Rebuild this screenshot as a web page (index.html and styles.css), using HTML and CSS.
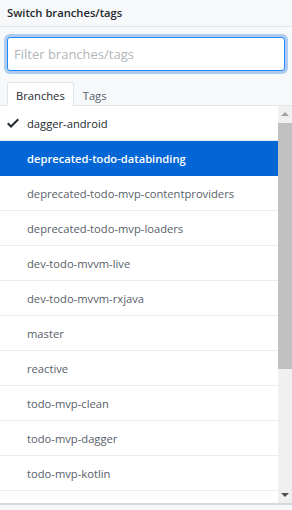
FILE: index.html
```html
<!DOCTYPE html>
<html lang="en">
<head>
  <meta charset="UTF-8" />
  <meta name="viewport" content="width=device-width, initial-scale=1.0" />
  <title>Switch branches/tags</title>
  <link rel="stylesheet" href="styles.css">
</head>
<body>
  <div class="menu">
    <div class="menu-header">Switch branches/tags</div>

    <div class="menu-filter">
      <input type="text" class="filter-input" placeholder="Filter branches/tags" />
    </div>

    <div class="menu-tabs">
      <span class="tab selected">Branches</span>
      <span class="tab">Tags</span>
    </div>

    <div class="menu-body">
      <ul class="menu-list">
        <li class="menu-item current">
          <svg class="check" width="12" height="16" viewBox="0 0 12 16"><path d="M12 5l-8 8-4-4 1.5-1.5L4 10l6.5-6.5z" fill="#24292e"/></svg>
          dagger-android
        </li>
        <li class="menu-item active">deprecated-todo-databinding</li>
        <li class="menu-item">deprecated-todo-mvp-contentproviders</li>
        <li class="menu-item">deprecated-todo-mvp-loaders</li>
        <li class="menu-item">dev-todo-mvvm-live</li>
        <li class="menu-item">dev-todo-mvvm-rxjava</li>
        <li class="menu-item">master</li>
        <li class="menu-item">reactive</li>
        <li class="menu-item">todo-mvp-clean</li>
        <li class="menu-item">todo-mvp-dagger</li>
        <li class="menu-item">todo-mvp-kotlin</li>
        <li class="menu-item">todo-mvp-rxjava</li>
      </ul>
      <div class="scrollbar">
        <span class="arrow up"></span>
        <div class="track"><div class="thumb"></div></div>
        <span class="arrow down"></span>
      </div>
    </div>
  </div>
</body>
</html>
```

FILE: styles.css
```css
* {
  box-sizing: border-box;
  padding: 0;
  margin: 0;
}

body {
  font-family: 'Open Sans', 'Noto Sans', sans-serif;
  background: #f6f8fa;
  color: #24292e;
  width: 292px;
  height: 510px;
  overflow: hidden;
}

.menu {
  display: flex;
  flex-direction: column;
}

.menu-header {
  height: 27px;
  padding: 5px 7px 0;
  font-size: 11.2px;
  font-weight: 600;
  line-height: 16px;
  border-bottom: 1px solid #e1e4e8;
}

.menu-filter {
  padding: 10px 7px 11px 7px;
}

.filter-input {
  display: block;
  width: 278px;
  height: 34px;
  padding: 0 6px;
  font-family: inherit;
  font-size: 13px;
  color: #24292e;
  background: #fff;
  border: 1px solid #2188ff;
  border-radius: 3px;
  outline: none;
  box-shadow: 0 0 0 3px rgba(3, 102, 214, 0.3);
}

.filter-input::placeholder {
  color: #b0b6bc;
}

.menu-tabs {
  display: flex;
  padding: 0 0 0 7px;
  height: 24px;
  border-bottom: 1px solid #e1e4e8;
}

.tab {
  display: block;
  height: 24px;
  padding: 4px 8px 0;
  font-size: 11.2px;
  line-height: 18px;
  color: #586069;
  border: 1px solid transparent;
  border-bottom: 0;
  border-radius: 3px 3px 0 0;
}

.tab.selected {
  color: #24292e;
  background: #fff;
  border-color: #e1e4e8;
  margin-bottom: -1px;
  height: 25px;
}

.menu-body {
  display: flex;
  height: 399px;
  border-bottom: 2px solid #d5d8dc;
  overflow: hidden;
  background: #fff;
}

.menu-list {
  list-style: none;
  flex: 1;
  overflow: hidden;
}

.menu-item {
  display: flex;
  align-items: center;
  height: 35px;
  padding: 0 8px 0 27px;
  font-size: 11.2px;
  color: #586069;
  border-bottom: 1px solid #eaecef;
  position: relative;
}

.menu-item.current {
  color: #24292e;
}

.check {
  position: absolute;
  left: 7px;
  top: 9px;
}

.menu-item.active {
  color: #fff;
  font-weight: 600;
  background: #0366d6;
  border-bottom-color: #0366d6;
}

.scrollbar {
  width: 14px;
  background: #f0f0f0;
  display: flex;
  flex-direction: column;
  align-items: center;
}

.arrow {
  display: block;
  width: 0;
  height: 0;
  border-left: 4px solid transparent;
  border-right: 4px solid transparent;
}

.arrow.up {
  margin: 6px 0 7px;
  border-bottom: 4px solid #a3a3a3;
}

.arrow.down {
  margin: 0 0 6px;
  border-top: 4px solid #505050;
}

.track {
  flex: 1;
  width: 100%;
}

.thumb {
  height: 246px;
  background: #c1c1c1;
}
```
